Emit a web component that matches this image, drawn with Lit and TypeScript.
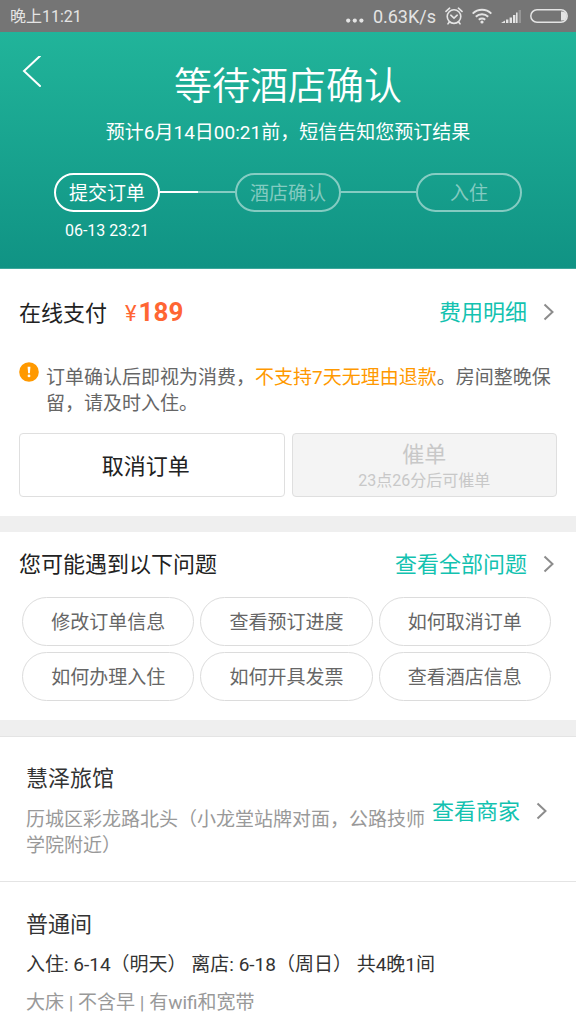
import { LitElement, html, css } from "lit";
import { customElement, property } from "lit/decorators.js";

const shared = css`
  * { box-sizing: border-box; }
  p, h1, h2, h3, ul, ol { margin: 0; padding: 0; font-weight: inherit; list-style: none; }
  button { font: inherit; color: inherit; padding: 0; margin: 0; background: none; border: 0; cursor: pointer; }
  a { color: inherit; text-decoration: none; }
  svg { display: block; flex: none; }
`;

@customElement("status-bar")
class StatusBar extends LitElement {
  static styles = [
    shared,
    css`
      :host {
        display: flex; align-items: center; justify-content: space-between;
        height: 32px; padding: 0 8px 0 10px; background: #757575; color: #e4e4e4; font-size: 16px; line-height: 32px;
      }
      .clock { padding-top: 2px; }
      .right { display: flex; align-items: center; gap: 9px; height: 32px; }
      .speed { padding-top: 2px; font-size: 18px; }
    `,
  ];

  render() {
    return html`
      <span class="clock">晚上11:21</span>
      <div class="right">
        <svg width="18" height="16" fill="#e4e4e4" aria-hidden="true">
          <circle cx="2.2" cy="12.6" r="2.1" /><circle cx="8.8" cy="12.6" r="2.1" /><circle cx="15.4" cy="12.6" r="2.1" />
        </svg>
        <span class="speed">0.63K/s</span>
        <svg width="18" height="18" fill="none" stroke="#e4e4e4" stroke-width="1.6" stroke-linecap="round" aria-hidden="true">
          <circle cx="9" cy="9.6" r="6.8" />
          <path d="M1 4.4 4.6 1.2M17 4.4 13.4 1.2M5.8 8.2 9 11.2 12.2 8.2M4.4 15 3 16.8M13.6 15 15 16.8" />
        </svg>
        <svg width="20" height="16" fill="none" stroke="#e4e4e4" stroke-width="2" aria-hidden="true">
          <path d="M.7 5.6a13.4 13.4 0 0 1 18.6 0M3.8 8.8a9 9 0 0 1 12.4 0M6.8 11.8a4.8 4.8 0 0 1 6.4 0" />
          <circle cx="10" cy="14" r="1.6" fill="#e4e4e4" stroke="none" />
        </svg>
        <svg width="20" height="14" fill="#e4e4e4" aria-hidden="true">
          <path d="M0 14 4 11.4V14zM5 10.4h2.4V14H5zM8.6 8.4H11V14H8.6zM12 6h2.4v8H12zM15 3.6h1.6V14H15z" />
          <path d="M17.6 1H20v13h-2.4z" opacity=".3" />
        </svg>
        <svg width="38" height="14" aria-hidden="true">
          <rect x=".8" y=".8" width="36.4" height="12.4" rx="6.2" fill="none" stroke="#e4e4e4" stroke-width="1.5" />
          <path d="M31 2.4h1.2a4.6 4.6 0 0 1 0 9.2H31z" fill="#e4e4e4" />
        </svg>
      </div>
    `;
  }
}

@customElement("order-header")
class OrderHeader extends LitElement {
  static styles = [
    shared,
    css`
      :host {
        display: block; padding: 24px 0 24px; color: #fff;
        background: linear-gradient(#21b49a, #109384); border-bottom: 1px solid #3da79b;
      }
      .top { display: grid; grid-template-columns: 64px 1fr 64px; }
      .back { width: 64px; height: 30px; padding-left: 22px; }
      h1 { font-size: 38px; font-weight: 350; line-height: 60px; text-align: center; }
      .note { margin-top: 4px; font-size: 19px; line-height: 26px; text-align: center; }
      .steps { display: flex; align-items: flex-start; margin-top: 27px; padding: 0 54px; }
      .step { display: flex; flex-direction: column; align-items: center; gap: 6px; width: 106px; color: rgba(255, 255, 255, .48); }
      .step.on { color: #fff; }
      .pill { width: 100%; height: 39px; border: 2px solid; border-radius: 20px; font-size: 19px; line-height: 37px; text-align: center; }
      .time { font-size: 16px; line-height: 26px; }
      .link { flex: 1; height: 2px; margin-top: 18px; background: rgba(255, 255, 255, .48); }
      .link.half { background: linear-gradient(to right, #fff 50%, rgba(255, 255, 255, .48) 50%); }
    `,
  ];

  render() {
    return html`
      <div class="top">
        <button class="back" aria-label="返回">
          <svg width="20" height="32" fill="none" stroke="#fff" stroke-width="2" stroke-linecap="round"><path d="M18 0 2 15 18 30" /></svg>
        </button>
        <h1>等待酒店确认</h1>
      </div>
      <p class="note">预计6月14日00:21前，短信告知您预订结果</p>
      <ol class="steps">
        <li class="step on"><span class="pill">提交订单</span><span class="time">06-13 23:21</span></li>
        <li class="link half" role="presentation"></li>
        <li class="step"><span class="pill">酒店确认</span></li>
        <li class="link" role="presentation"></li>
        <li class="step"><span class="pill">入住</span></li>
      </ol>
    `;
  }
}

@customElement("more-link")
class MoreLink extends LitElement {
  @property() label = "";

  static styles = [
    shared,
    css`
      :host { display: block; flex: none; }
      a { display: flex; align-items: center; gap: 16px; height: 32px; color: #13c2b0; font-size: 22px; line-height: 32px; }
      span { padding-top: 2px; }
    `,
  ];

  render() {
    return html`<a href="#"><span>${this.label}</span>
      <svg width="11" height="18" fill="none" stroke="#8c8c8c" stroke-width="2"><path d="M1.5 1.5 9.5 9 1.5 16.5" /></svg></a>`;
  }
}

const questions = ["修改订单信息", "查看预订进度", "如何取消订单", "如何办理入住", "如何开具发票", "查看酒店信息"];

@customElement("app-root")
class AppRoot extends LitElement {
  static styles = [
    shared,
    css`
      :host {
        display: block; min-height: 100vh; background: #fff; color: #222;
        font-family: Roboto, "Noto Sans CJK SC", sans-serif; font-size: 19px; line-height: 26px;
      }
      .row { display: flex; align-items: center; justify-content: space-between; height: 32px; padding: 0 3px 0 0; }
      h2, h3 { font-size: 22px; line-height: 32px; }
      .row h2 { padding-top: 2px; }
      .pay { padding: 27px 19px 19px; }
      .total { display: flex; align-items: baseline; gap: 18px; }
      .price { display: flex; align-items: baseline; gap: 2px; color: #ff6633; }
      .price b { font-size: 26px; }
      .notice { display: flex; gap: 7px; margin-top: 34px; color: #666; }
      .notice p { padding-top: 3px; }
      .notice em { font-style: normal; color: #ff9900; }
      .actions { display: grid; grid-template-columns: 1fr 1fr; gap: 7px; margin-top: 16px; }
      .action {
        display: flex; flex-direction: column; align-items: center; justify-content: center;
        height: 64px; padding-top: 3px; border: 1px solid #dfdfdf; border-radius: 4px; font-size: 22px; line-height: 28px;
      }
      .cancel { padding-right: 12px; }
      .action:disabled { background: #f4f4f4; color: #c8c8c8; cursor: default; }
      .action small { font-size: 16px; line-height: 24px; }
      .band { height: 16px; background: #efefef; }
      .faq { padding: 16px 19px 19px; }
      .chips { display: grid; grid-template-columns: repeat(3, 1fr); gap: 6px; margin-top: 17px; padding: 0 6px 0 3px; }
      .chip { display: block; width: 100%; height: 49px; padding-top: 2px; border: 1px solid #dcdcdc; border-radius: 25px; color: #666; }
      .card { padding: 26px 26px 22px; border-top: 1px solid #e4e4e4; color: #333; }
      .hotel { display: flex; align-items: center; gap: 6px; padding-right: 29px; }
      .info { flex: 1; }
      .address { margin-top: 12px; color: #999; }
      .dates { margin-top: 11px; }
      .room { color: #999; margin-top: 12px; }
      .stay { padding-top: 27px; padding-bottom: 8px; }
    `,
  ];

  render() {
    return html`
      <status-bar></status-bar>
      <order-header></order-header>
      <main>
        <section class="pay">
          <div class="row">
            <div class="total">
              <h2>在线支付</h2>
              <h2 class="price">¥<b>189</b></h2>
            </div>
            <more-link label="费用明细"></more-link>
          </div>
          <div class="notice">
            <svg width="20" height="20" aria-hidden="true">
              <circle cx="10" cy="10" r="9.8" fill="#ff9900" />
              <path d="M8.6 4.8h2.8l-.5 6.4H9.1z" fill="#fff" /><circle cx="10" cy="13.9" r="1.4" fill="#fff" />
            </svg>
            <p>订单确认后即视为消费，<em>不支持7天无理由退款</em>。房间整晚保留，请及时入住。</p>
          </div>
          <div class="actions">
            <button class="action cancel">取消订单</button>
            <button class="action" disabled>催单<small>23点26分后可催单</small></button>
          </div>
        </section>
        <div class="band"></div>
        <section class="faq">
          <div class="row">
            <h2>您可能遇到以下问题</h2>
            <more-link label="查看全部问题"></more-link>
          </div>
          <ul class="chips">
            ${questions.map((q) => html`<li><button class="chip">${q}</button></li>`)}
          </ul>
        </section>
        <div class="band"></div>
        <section class="card hotel">
          <div class="info">
            <h3>慧泽旅馆</h3>
            <p class="address">历城区彩龙路北头（小龙堂站牌对面，公路技师学院附近）</p>
          </div>
          <more-link label="查看商家"></more-link>
        </section>
        <section class="card stay">
          <h3>普通间</h3>
          <p class="dates">入住: 6-14（明天） 离店: 6-18（周日） 共4晚1间</p>
          <p class="room">大床 | 不含早 | 有wifi和宽带</p>
        </section>
      </main>
    `;
  }
}
